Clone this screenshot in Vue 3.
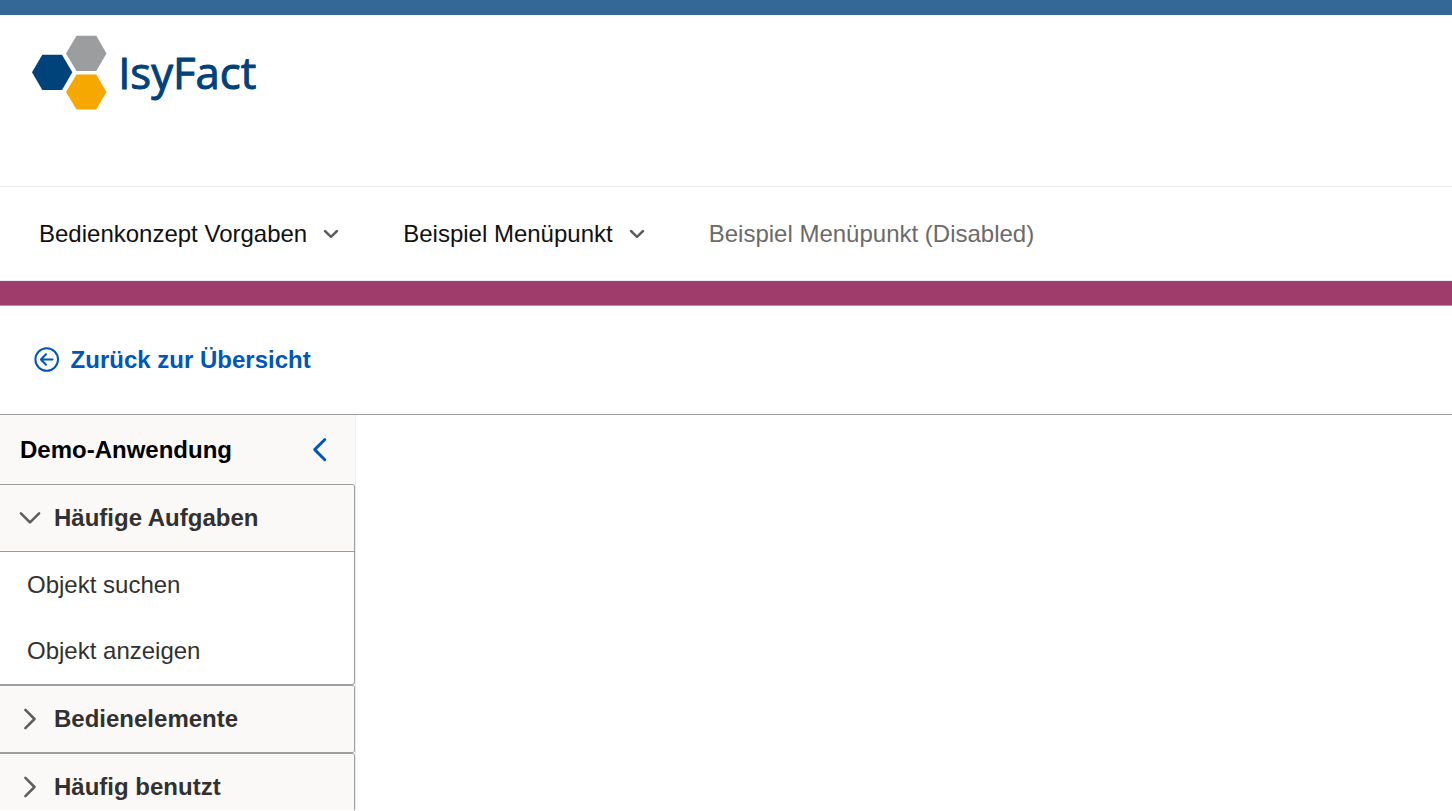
<script setup>
const menu = [
  { label: 'Bedienkonzept Vorgaben' },
  { label: 'Beispiel Menüpunkt' },
  { label: 'Beispiel Menüpunkt (Disabled)', disabled: true },
]
const panels = [
  { title: 'Häufige Aufgaben', open: true, items: ['Objekt suchen', 'Objekt anzeigen'] },
  { title: 'Bedienelemente', open: false, items: [] },
  { title: 'Häufig benutzt', open: false, items: [] },
]
</script>

<template>
  <div class="page">
    <div class="topbar"></div>
    <header class="brand">
      <svg class="logo" width="260" height="100" viewBox="0 0 260 100" role="img" aria-label="IsyFact">
        <polygon fill="#9b9d9f" points="56.5,5.8 76.3,5.8 86.5,23.5 76.3,41 56.5,41 46,23.5" />
        <polygon fill="#00427a" points="22.3,24.7 42,24.7 52.3,42.3 42,60 22.3,60 12,42.3" />
        <polygon fill="#f6a800" points="56.5,44.6 76.3,44.6 86.5,62 76.3,79.6 56.5,79.6 46,62" />
        <text x="98.2" y="58.6" textLength="138" lengthAdjust="spacingAndGlyphs">IsyFact</text>
      </svg>
    </header>
    <nav class="menubar">
      <a v-for="m in menu" :key="m.label" class="menu-item" :class="{ disabled: m.disabled }">
        <span>{{ m.label }}</span>
        <svg v-if="!m.disabled" width="16" height="10" viewBox="0 0 16 10">
          <path d="M2 2 L8 7.8 L14 2" />
        </svg>
      </a>
    </nav>
    <div class="accent"></div>
    <div class="backbar">
      <a class="back">
        <svg width="26" height="26" viewBox="0 0 26 26">
          <circle cx="12.7" cy="12.5" r="11.3" />
          <path d="M18.6 12.5 H7.3 M12 7.2 L6.9 12.5 L12 17.8" />
        </svg>
        <span>Zurück zur Übersicht</span>
      </a>
    </div>
    <div class="body">
      <aside class="sidebar">
        <div class="side-head">
          <span>Demo-Anwendung</span>
          <svg width="16" height="26" viewBox="0 0 16 26">
            <path d="M12.8 2.5 L2.7 12.6 L12.8 22.7" />
          </svg>
        </div>
        <section v-for="p in panels" :key="p.title" class="panel">
          <div class="panel-head" :class="{ open: p.open }">
            <svg width="24" height="24" viewBox="0 0 24 24">
              <path :d="p.open ? 'M2.9 7.3 L12 16.4 L21.1 7.3' : 'M7.4 2.9 L16.5 12 L7.4 21.1'" />
            </svg>
            <span>{{ p.title }}</span>
          </div>
          <div v-if="p.open" class="panel-body">
            <a v-for="i in p.items" :key="i">{{ i }}</a>
          </div>
        </section>
      </aside>
      <main></main>
    </div>
  </div>
</template>

<style>
body {
  background: #fff;
  overflow: hidden;
}
</style>

<style scoped>
.page {
  height: 810px;
  overflow: hidden;
  display: flex;
  flex-direction: column;
  font: 24px/28px "Liberation Sans", Arial, sans-serif;
  color: #323130;
}
.page * {
  box-sizing: border-box;
}
svg {
  display: block;
  flex: none;
  fill: none;
  stroke-linecap: round;
  stroke-linejoin: round;
}
.topbar {
  height: 15px;
  flex: none;
  background: #336897;
}
.brand {
  height: 172px;
  flex: none;
  padding: 15px 0 0 20px;
  border-bottom: 1px solid #edebe9;
}
.logo {
  overflow: visible;
}
.logo text {
  font: 400 43px "Open Sans", sans-serif;
  fill: #00427a;
  stroke: #00427a;
  stroke-width: 1;
}
.menubar {
  height: 94px;
  flex: none;
  display: flex;
  align-items: center;
  gap: 64px;
  padding-left: 39px;
  border-bottom: 1px solid #edebe9;
}
.menu-item {
  display: flex;
  align-items: center;
  gap: 16px;
  color: #11100f;
  white-space: nowrap;
}
.menu-item svg {
  stroke: #605e5c;
  stroke-width: 2.5;
}
.menu-item.disabled {
  color: #6b6a69;
}
.accent {
  height: 25px;
  flex: none;
  background: #a03c6b;
  border-bottom: 1px solid #a19f9d;
}
.backbar {
  height: 109px;
  flex: none;
  display: flex;
  align-items: center;
  padding-left: 33.6px;
  border-bottom: 1px solid #a19f9d;
}
.back {
  display: flex;
  align-items: center;
  gap: 11px;
  color: #0056b9;
  font-weight: 700;
}
.back svg {
  stroke: #0056b9;
  stroke-width: 2;
}
.body {
  flex: 1;
  min-height: 0;
  display: flex;
}
.sidebar {
  width: 356px;
  flex: none;
  border-right: 1px solid #edebe9;
}
.side-head {
  height: 69px;
  display: flex;
  align-items: center;
  justify-content: space-between;
  padding: 0 27px 0 20px;
  background: #faf9f8;
  color: #000;
  font-weight: 700;
}
.side-head svg {
  stroke: #0056b9;
  stroke-width: 2.9;
}
.panel {
  border: 1px solid #a19f9d;
  border-left: 0;
  border-radius: 0 3px 3px 0;
  overflow: hidden;
}
.panel-head {
  height: 66px;
  display: flex;
  align-items: center;
  gap: 12px;
  padding-left: 18px;
  background: #faf9f8;
  font-weight: 700;
}
.panel-head.open {
  height: 67px;
  border-bottom: 1px solid #a19f9d;
}
.panel-head svg {
  stroke: #605e5c;
  stroke-width: 2.6;
}
.panel-body a {
  display: flex;
  align-items: center;
  height: 66px;
  padding-left: 27px;
}
main {
  flex: 1;
}
</style>
